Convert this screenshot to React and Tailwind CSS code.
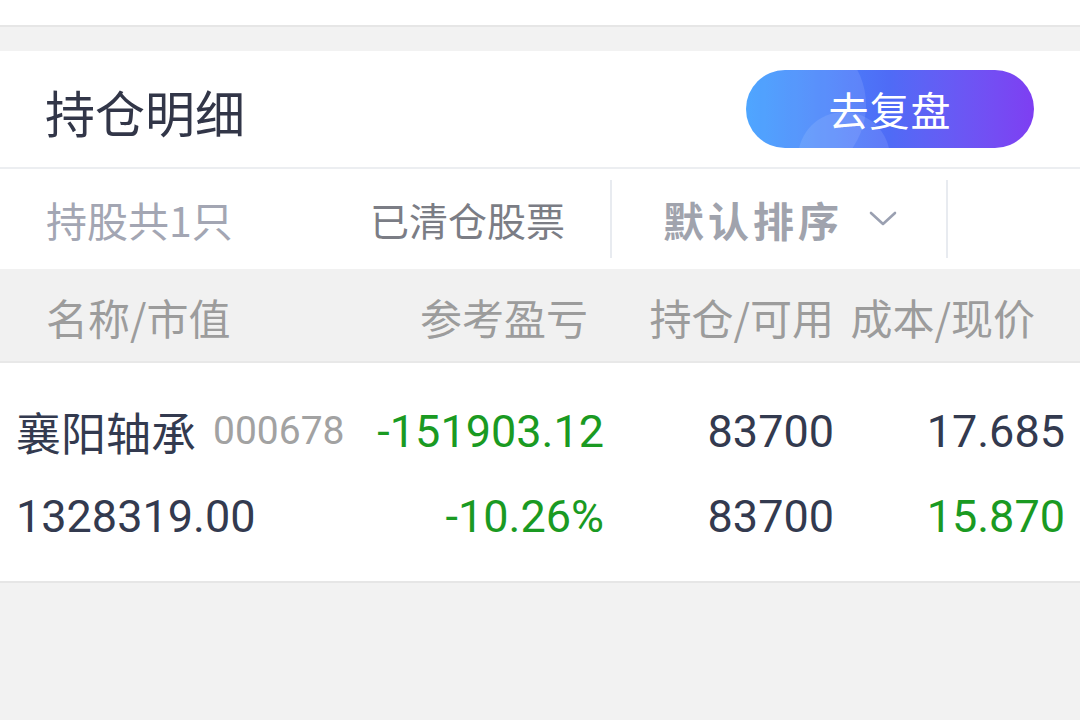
import React from "react";

const CJK = { fontFamily: '"Noto Sans CJK SC", "Noto Sans", sans-serif' };
const NUM = { fontFamily: 'Roboto, "Noto Sans CJK SC", sans-serif' };

export default function App() {
  return (
    <div className="w-[1080px] h-[720px] bg-[#f2f2f2] overflow-hidden" style={CJK}>
      <div className="h-[27px] bg-white border-b-2 border-[#e6e6e6]" />
      <div className="h-[24px]" />
      {/* Title row */}
      <div className="h-[118px] bg-white flex items-center justify-between pl-[45px] pr-[46px] border-b-2 border-[#eceef1]">
        <div className="text-[50px] leading-none text-[#323648] pt-[3px]">持仓明细</div>
        <div className="relative w-[288px] h-[78px] rounded-full overflow-hidden bg-gradient-to-r from-[#3a9cff] via-[#4f6bf6] to-[#7e3ef2] flex items-center justify-center">
          <div className="absolute -left-[30px] -top-[40px] w-[150px] h-[150px] rounded-full bg-white/10" />
          <div className="absolute left-[52px] top-[42px] w-[92px] h-[92px] rounded-full bg-white/10" />
          <span className="relative text-white text-[40px] leading-none tracking-[1px]">去复盘</span>
        </div>
      </div>
      {/* Filter row */}
      <div className="h-[100px] bg-white flex items-center">
        <div className="w-[370px] pl-[46px] text-[41px] leading-none text-[#a3a6b3]">持股共1只</div>
        <div className="w-[240px] text-[39px] leading-none text-[#7b7d85]">已清仓股票</div>
        <div className="w-[2px] h-[78px] bg-[#e8ebf0]" />
        <div className="w-[334px] flex items-center pl-[51px]">
          <span className="text-[41px] leading-none text-[#a0a3ad] font-bold tracking-[4px]">默认排序</span>
          <svg className="ml-[26px]" width="28" height="16" viewBox="0 0 28 16">
            <path d="M2 2 L14 13 L26 2" fill="none" stroke="#9aa0b1" strokeWidth="2.6" strokeLinecap="round" strokeLinejoin="round" />
          </svg>
        </div>
        <div className="w-[2px] h-[78px] bg-[#e8ebf0]" />
      </div>
      {/* Header row */}
      <div className="h-[94px] bg-[#f1f1f1] flex items-center pt-[4px] text-[42px] leading-none text-[#9c9c9c] border-b-2 border-[#e8e8e8]">
        <div className="w-[330px] pl-[46px]">名称/市值</div>
        <div className="w-[258px] text-right">参考盈亏</div>
        <div className="w-[246px] text-right">持仓/可用</div>
        <div className="w-[201px] text-right">成本/现价</div>
      </div>
      {/* Data rows */}
      <div className="h-[220px] bg-white border-b-2 border-[#e6e6e6] flex flex-col pt-[43px]">
        <div className="h-[50px] flex items-center leading-none text-[#333a4f]">
          <div className="w-[376px] pl-[16px] flex items-center">
            <span className="text-[45px]" style={CJK}>襄阳轴承</span>
            <span className="ml-[17px] text-[39px] text-[#a2a2a2]" style={NUM}>000678</span>
          </div>
          <div className="w-[228px] text-right text-[45px] text-[#1a9a22]" style={NUM}>-151903.12</div>
          <div className="w-[230px] text-right text-[45px]" style={NUM}>83700</div>
          <div className="w-[231px] text-right text-[45px]" style={NUM}>17.685</div>
        </div>
        <div className="h-[50px] mt-[35px] flex items-center leading-none text-[#333a4f]">
          <div className="w-[376px] pl-[16px] text-[45px]" style={NUM}>1328319.00</div>
          <div className="w-[228px] text-right text-[45px] text-[#1a9a22]" style={NUM}>-10.26%</div>
          <div className="w-[230px] text-right text-[45px]" style={NUM}>83700</div>
          <div className="w-[231px] text-right text-[45px] text-[#1a9a22]" style={NUM}>15.870</div>
        </div>
      </div>
    </div>
  );
}
